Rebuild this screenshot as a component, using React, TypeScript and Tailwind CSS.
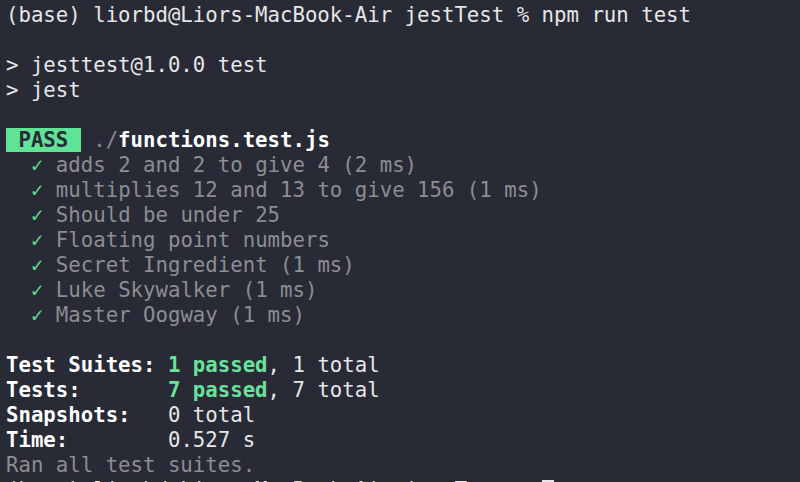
import React from "react";

const tests = [
  "adds 2 and 2 to give 4 (2 ms)",
  "multiplies 12 and 13 to give 156 (1 ms)",
  "Should be under 25",
  "Floating point numbers",
  "Secret Ingredient (1 ms)",
  "Luke Skywalker (1 ms)",
  "Master Oogway (1 ms)",
];

const prompt = "(base) liorbd@Liors-MacBook-Air jestTest % ";

function Line({ children }: { children?: React.ReactNode }) {
  return <div className="h-[25px] leading-[25px] whitespace-pre">{children ?? " "}</div>;
}

export default function App() {
  return (
    <div
      className="w-[800px] h-[482px] overflow-hidden bg-[#282a36] text-[#e6e6e6] pl-[6px] pt-[3px] text-[20.7px]"
      style={{ fontFamily: '"DejaVu Sans Mono", "Liberation Mono", monospace' }}
    >
      <Line>{prompt}npm run test</Line>
      <Line />
      <Line>&gt; jesttest@1.0.0 test</Line>
      <Line>&gt; jest</Line>
      <Line />
      <Line>
        <span className="inline-block h-[24px] leading-[24px] align-top bg-[#5fe394] text-[#282a36] font-bold"> PASS </span>
        <span className="text-[#8a8a8f]"> ./</span>
        <span className="font-bold text-white">functions.test.js</span>
      </Line>
      {tests.map((t) => (
        <Line key={t}>
          {"  "}
          <span className="text-[#5fd98b]">✓</span>
          <span className="text-[#8d8d92]"> {t}</span>
        </Line>
      ))}
      <Line />
      <Line>
        <span className="font-bold text-white">Test Suites: </span>
        <span className="font-bold text-[#69e39b]">1 passed</span>, 1 total
      </Line>
      <Line>
        <span className="font-bold text-white">Tests:       </span>
        <span className="font-bold text-[#69e39b]">7 passed</span>, 7 total
      </Line>
      <Line>
        <span className="font-bold text-white">Snapshots:   </span>0 total
      </Line>
      <Line>
        <span className="font-bold text-white">Time:        </span>0.527 s
      </Line>
      <Line>
        <span className="text-[#8d8d92]">Ran all test suites.</span>
      </Line>
      <Line>
        {prompt}
        <span className="inline-block w-[12px] h-[22px] align-middle border-2 border-[#e6e6e6]" />
      </Line>
    </div>
  );
}
